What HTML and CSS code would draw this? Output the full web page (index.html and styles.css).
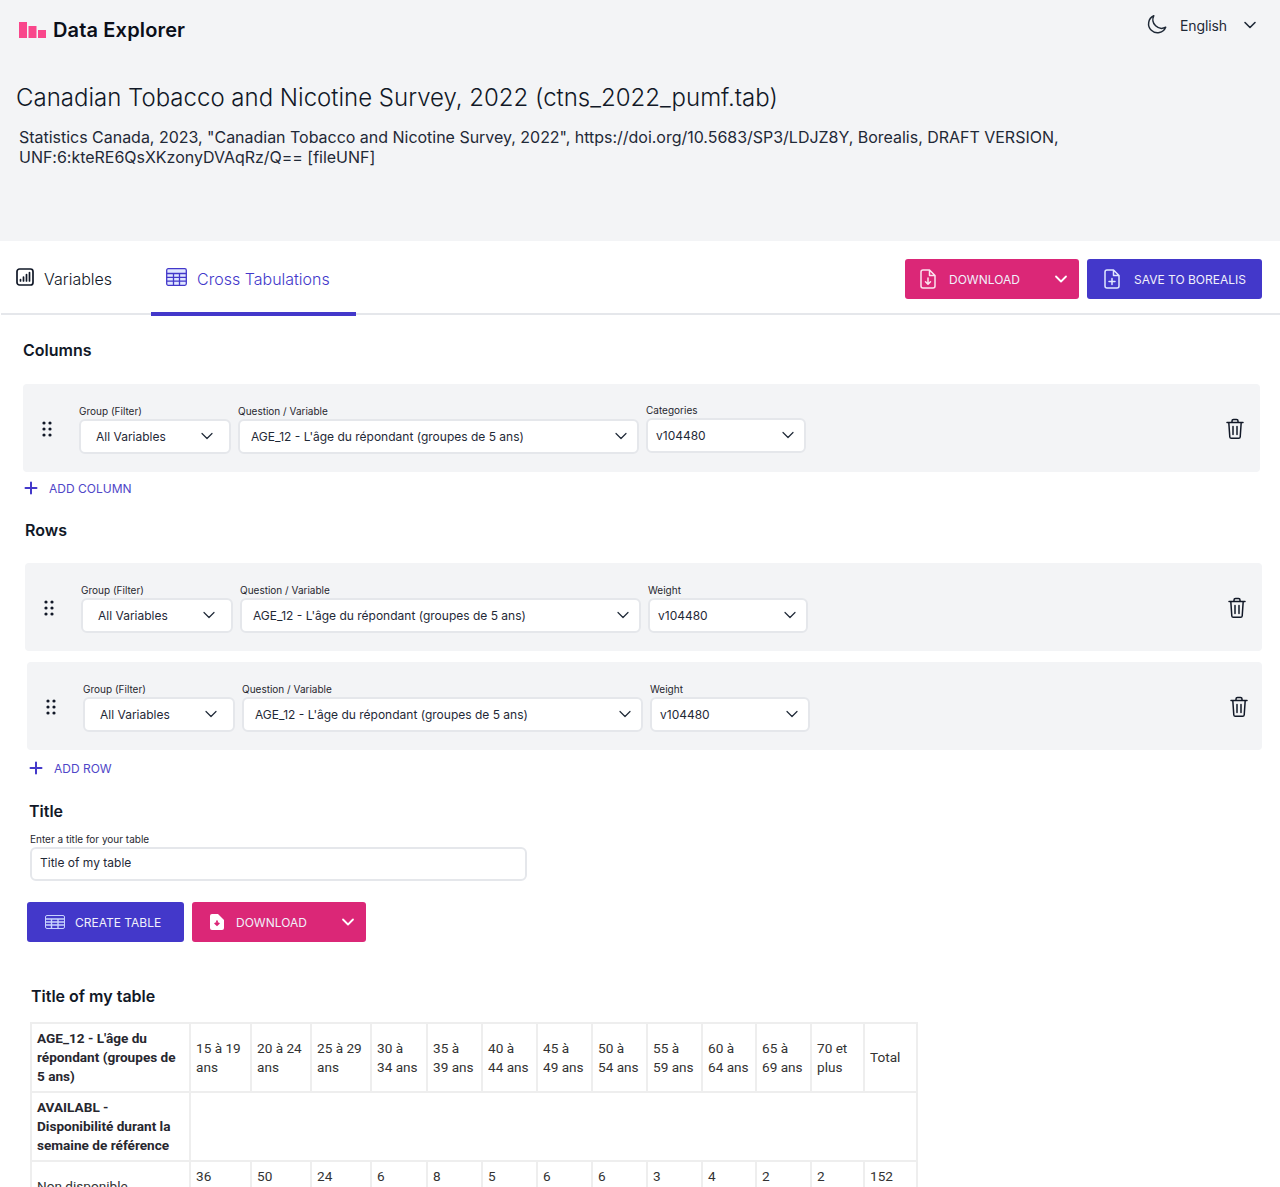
FILE: index.html
```html
<!DOCTYPE html>
<html lang="en">
<head>
    <meta charset="UTF-8">
    <meta name="viewport" content="width=device-width, initial-scale=1.0">
    <title>Data Explorer</title>
    <link rel="stylesheet" href="styles.css">
</head>
<body>
    <header class="top">
        <div class="top-bar">
            <div class="brand">
                <svg class="logo" width="28" height="16" viewBox="0 0 28 16"><rect x="0" y="0" width="8" height="16"/><rect x="9.500" y="4" width="8" height="12"/><rect x="19" y="8" width="8" height="8"/></svg>
                <span>Data Explorer</span>
            </div>
            <div class="top-tools">
                <svg class="moon" width="22" height="22" viewBox="0 0 24 24" fill="none" stroke="#1f2937" stroke-width="1.600" stroke-linecap="round" stroke-linejoin="round"><path d="M21.500 15.500A9.500 9.500 0 0 1 8.500 3a9.700 9.700 0 1 0 13 12.500z"/></svg>
                <span class="lang">English</span>
                <svg class="chev-top" width="14" height="14" viewBox="0 0 14 14" fill="none" stroke="#1f2937" stroke-width="1.600" stroke-linecap="round" stroke-linejoin="round"><path d="M2 4.500l5 5 5-5"/></svg>
            </div>
        </div>
        <h1>Canadian Tobacco and Nicotine Survey, 2022 (ctns_2022_pumf.tab)</h1>
        <p class="citation">Statistics Canada, 2023, "Canadian Tobacco and Nicotine Survey, 2022", https://doi.org/10.5683/SP3/LDJZ8Y, Borealis, DRAFT VERSION,<br>UNF:6:kteRE6QsXKzonyDVAqRz/Q== [fileUNF]</p>
    </header>

    <nav class="tabs">
        <div class="tab">
            <svg class="tab-icon" width="18" height="18" viewBox="0 0 18 18" fill="none" stroke="#111827" stroke-width="1.700" stroke-linecap="round"><rect x="1" y="1" width="16" height="16" rx="2.500"/><path d="M4.500 13v-1.500M7.500 13V9M10.500 13V6.500M13.500 13V4.500"/></svg>
            <span>Variables</span>
        </div>
        <div class="tab tab-active">
            <svg class="tab-icon" width="21" height="18" viewBox="0 0 21 18" fill="#e0e7ff" stroke="#4338ca" stroke-width="1.300"><rect x=".7" y=".7" width="19.600" height="16.600" rx="1.500"/><path d="M.7 5.500h19.600M.7 9.300h19.600M.7 13.200h19.600M7.500 5.500v11.800M13.500 5.500v11.800" fill="none"/></svg>
            <span>Cross Tabulations</span>
        </div>
        <div class="tab-actions">
            <button class="btn btn-pink btn-download">
                <svg width="16" height="20" viewBox="0 0 16 20" fill="none" stroke="#fbe4ef" stroke-width="1.500" stroke-linecap="round" stroke-linejoin="round"><path d="M3 1h6.500L15 6.500V17a2 2 0 0 1-2 2H3a2 2 0 0 1-2-2V3a2 2 0 0 1 2-2zM9.500 1v5.500H15M8 9v6M5.500 12.800L8 15.300l2.500-2.500"/></svg>
                <span class="btn-label">Download</span>
                <svg class="btn-chev" width="14" height="14" viewBox="0 0 14 14" fill="none" stroke="#fff" stroke-width="1.800" stroke-linecap="round" stroke-linejoin="round"><path d="M2 4.500l5 5 5-5"/></svg>
            </button>
            <button class="btn btn-blue btn-save">
                <svg width="16" height="20" viewBox="0 0 16 20" fill="none" stroke="#e0e7ff" stroke-width="1.500" stroke-linecap="round" stroke-linejoin="round"><path d="M3 1h6.500L15 6.500V17a2 2 0 0 1-2 2H3a2 2 0 0 1-2-2V3a2 2 0 0 1 2-2zM9.500 1v5.500H15M8 9.500v6M5 12.500h6"/></svg>
                <span class="btn-label">Save to Borealis</span>
            </button>
        </div>
    </nav>

    <main>
        <section class="section-columns">
            <h2>Columns</h2>
            <div class="filter-row">
                <svg class="grip" width="10" height="16" viewBox="0 0 10 16" fill="#111827"><circle cx="2" cy="2" r="1.600"/><circle cx="8" cy="2" r="1.600"/><circle cx="2" cy="8" r="1.600"/><circle cx="8" cy="8" r="1.600"/><circle cx="2" cy="14" r="1.600"/><circle cx="8" cy="14" r="1.600"/></svg>
                <div class="field field-group"><label>Group (Filter)</label><div class="select"><span>All Variables</span><svg width="12" height="12" viewBox="0 0 12 12" fill="none" stroke="#1f2937" stroke-width="1.200" stroke-linecap="round" stroke-linejoin="round"><path d="M1 3.500l5 5 5-5"/></svg></div></div>
                <div class="field field-question"><label>Question / Variable</label><div class="select"><span>AGE_12 - L'âge du répondant (groupes de 5 ans)</span><svg width="12" height="12" viewBox="0 0 12 12" fill="none" stroke="#1f2937" stroke-width="1.200" stroke-linecap="round" stroke-linejoin="round"><path d="M1 3.500l5 5 5-5"/></svg></div></div>
                <div class="field field-extra raised"><label>Categories</label><div class="select"><span>v104480</span><svg width="12" height="12" viewBox="0 0 12 12" fill="none" stroke="#1f2937" stroke-width="1.200" stroke-linecap="round" stroke-linejoin="round"><path d="M1 3.500l5 5 5-5"/></svg></div></div>
                <svg class="trash" width="18" height="22" viewBox="0 0 18 22" fill="none" stroke="#111827" stroke-width="1.500" stroke-linecap="round" stroke-linejoin="round"><path d="M1 4.500h16M6 4.500V3a1.500 1.500 0 0 1 1.500-1.500h3A1.500 1.500 0 0 1 12 3v1.500M2.800 4.500l1 14.500a1.500 1.500 0 0 0 1.500 1.300h7.400a1.500 1.500 0 0 0 1.500-1.300l1-14.500M7 8.500v8M11 8.500v8"/></svg>
            </div>
            <div class="add-link">
                <svg width="14" height="14" viewBox="0 0 14 14" fill="none" stroke="#4338ca" stroke-width="2" stroke-linecap="round"><path d="M7 1.500v11M1.500 7h11"/></svg>
                <span>Add Column</span>
            </div>
        </section>

        <section class="section-rows">
            <h2>Rows</h2>
            <div class="filter-row">
                <svg class="grip" width="10" height="16" viewBox="0 0 10 16" fill="#111827"><circle cx="2" cy="2" r="1.600"/><circle cx="8" cy="2" r="1.600"/><circle cx="2" cy="8" r="1.600"/><circle cx="8" cy="8" r="1.600"/><circle cx="2" cy="14" r="1.600"/><circle cx="8" cy="14" r="1.600"/></svg>
                <div class="field field-group"><label>Group (Filter)</label><div class="select"><span>All Variables</span><svg width="12" height="12" viewBox="0 0 12 12" fill="none" stroke="#1f2937" stroke-width="1.200" stroke-linecap="round" stroke-linejoin="round"><path d="M1 3.500l5 5 5-5"/></svg></div></div>
                <div class="field field-question"><label>Question / Variable</label><div class="select"><span>AGE_12 - L'âge du répondant (groupes de 5 ans)</span><svg width="12" height="12" viewBox="0 0 12 12" fill="none" stroke="#1f2937" stroke-width="1.200" stroke-linecap="round" stroke-linejoin="round"><path d="M1 3.500l5 5 5-5"/></svg></div></div>
                <div class="field field-extra"><label>Weight</label><div class="select"><span>v104480</span><svg width="12" height="12" viewBox="0 0 12 12" fill="none" stroke="#1f2937" stroke-width="1.200" stroke-linecap="round" stroke-linejoin="round"><path d="M1 3.500l5 5 5-5"/></svg></div></div>
                <svg class="trash" width="18" height="22" viewBox="0 0 18 22" fill="none" stroke="#111827" stroke-width="1.500" stroke-linecap="round" stroke-linejoin="round"><path d="M1 4.500h16M6 4.500V3a1.500 1.500 0 0 1 1.500-1.500h3A1.500 1.500 0 0 1 12 3v1.500M2.800 4.500l1 14.500a1.500 1.500 0 0 0 1.500 1.300h7.400a1.500 1.500 0 0 0 1.500-1.300l1-14.500M7 8.500v8M11 8.500v8"/></svg>
            </div>
            <div class="filter-row filter-row-second">
                <svg class="grip" width="10" height="16" viewBox="0 0 10 16" fill="#111827"><circle cx="2" cy="2" r="1.600"/><circle cx="8" cy="2" r="1.600"/><circle cx="2" cy="8" r="1.600"/><circle cx="8" cy="8" r="1.600"/><circle cx="2" cy="14" r="1.600"/><circle cx="8" cy="14" r="1.600"/></svg>
                <div class="field field-group"><label>Group (Filter)</label><div class="select"><span>All Variables</span><svg width="12" height="12" viewBox="0 0 12 12" fill="none" stroke="#1f2937" stroke-width="1.200" stroke-linecap="round" stroke-linejoin="round"><path d="M1 3.500l5 5 5-5"/></svg></div></div>
                <div class="field field-question"><label>Question / Variable</label><div class="select"><span>AGE_12 - L'âge du répondant (groupes de 5 ans)</span><svg width="12" height="12" viewBox="0 0 12 12" fill="none" stroke="#1f2937" stroke-width="1.200" stroke-linecap="round" stroke-linejoin="round"><path d="M1 3.500l5 5 5-5"/></svg></div></div>
                <div class="field field-extra"><label>Weight</label><div class="select"><span>v104480</span><svg width="12" height="12" viewBox="0 0 12 12" fill="none" stroke="#1f2937" stroke-width="1.200" stroke-linecap="round" stroke-linejoin="round"><path d="M1 3.500l5 5 5-5"/></svg></div></div>
                <svg class="trash" width="18" height="22" viewBox="0 0 18 22" fill="none" stroke="#111827" stroke-width="1.500" stroke-linecap="round" stroke-linejoin="round"><path d="M1 4.500h16M6 4.500V3a1.500 1.500 0 0 1 1.500-1.500h3A1.500 1.500 0 0 1 12 3v1.500M2.800 4.500l1 14.500a1.500 1.500 0 0 0 1.500 1.300h7.400a1.500 1.500 0 0 0 1.500-1.300l1-14.500M7 8.500v8M11 8.500v8"/></svg>
            </div>
            <div class="add-link add-row">
                <svg width="14" height="14" viewBox="0 0 14 14" fill="none" stroke="#4338ca" stroke-width="2" stroke-linecap="round"><path d="M7 1.500v11M1.500 7h11"/></svg>
                <span>Add Row</span>
            </div>
        </section>

        <section class="section-title">
            <h2>Title</h2>
            <label class="title-label">Enter a title for your table</label>
            <div class="title-input">Title of my table</div>
            <div class="title-actions">
                <button class="btn btn-blue btn-create">
                    <svg width="20" height="14" viewBox="0 0 20 14" fill="#e0e7ff" stroke="#c7d2fe" stroke-width="1"><rect x=".5" y=".5" width="19" height="13" rx="1.500" fill="none"/><path d="M.5 4h19M.5 7h19M.5 10h19M6.500 4v9.500M13 4v9.500" fill="none" stroke-width="1.400"/></svg>
                    <span class="btn-label">Create Table</span>
                </button>
                <button class="btn btn-pink btn-download-solid">
                    <svg width="14" height="16" viewBox="0 0 14 16"><path d="M2 0h6l6 6v8a2 2 0 0 1-2 2H2a2 2 0 0 1-2-2V2a2 2 0 0 1 2-2z" fill="#fff"/><path d="M7 6.500v4M4.700 8.800L7 11l2.300-2.200" fill="none" stroke="#db2777" stroke-width="1.800"/></svg>
                    <span class="btn-label">Download</span>
                    <svg class="btn-chev" width="14" height="14" viewBox="0 0 14 14" fill="none" stroke="#fff" stroke-width="1.800" stroke-linecap="round" stroke-linejoin="round"><path d="M2 4.500l5 5 5-5"/></svg>
                </button>
            </div>
        </section>

        <section class="section-table">
            <h2>Title of my table</h2>
            <table class="results">
                <tr class="row-head">
                    <th>AGE_12 - L'âge du répondant (groupes de 5 ans)</th>
                    <td>15 à 19 ans</td><td>20 à 24 ans</td><td>25 à 29 ans</td><td>30 à 34 ans</td><td>35 à 39 ans</td><td>40 à 44 ans</td><td>45 à 49 ans</td><td>50 à 54 ans</td><td>55 à 59 ans</td><td>60 à 64 ans</td><td>65 à 69 ans</td><td>70 et plus</td><td>Total</td>
                </tr>
                <tr class="row-var">
                    <th>AVAILABL - Disponibilité durant la semaine de référence</th>
                    <td colspan="13"></td>
                </tr>
                <tr>
                    <td>Non disponible</td>
                    <td>36<br>0.92%</td><td>50<br>1.28%</td><td>24<br>0.61%</td><td>6<br>0.15%</td><td>8<br>0.2%</td><td>5<br>0.13%</td><td>6<br>0.15%</td><td>6<br>0.15%</td><td>3<br>0.08%</td><td>4<br>0.1%</td><td>2<br>0.05%</td><td>2<br>0.05%</td><td>152<br>3.89%</td>
                </tr>
            </table>
        </section>
    </main>
</body>
</html>
```

FILE: styles.css
```css
html, body {
    margin: 0;
    padding: 0;
    height: 1187px;
    overflow: hidden;
}

body {
    font-family: Inter, "Liberation Sans", sans-serif;
    background-color: #fff;
    color: #111827;
}

/* Header */
.top {
    height: 241px;
    background-color: #f3f4f6;
    box-sizing: border-box;
    padding-top: 14px;
}

.top-bar {
    display: flex;
    justify-content: space-between;
    height: 32px;
    padding: 0 23px 0 19px;
}

.brand {
    display: flex;
    align-items: center;
    gap: 6px;
    font-size: 20px;
    font-weight: 600;
    letter-spacing: 0.15px;
    color: #0b0f19;
}

.logo {
    fill: #f9468b;
}

.top-tools {
    display: flex;
    align-items: center;
    height: 24px;
    margin-top: -1px;
}

.moon {
    margin-top: -2px;
}

.lang {
    margin-left: 12px;
    font-size: 14px;
    letter-spacing: -0.1px;
    color: #1f2937;
}

.chev-top {
    margin-left: 16px;
}

h1 {
    margin: 36px 0 0 16px;
    font-size: 24px;
    font-weight: 300;
    line-height: 32px;
    color: #111827;
}

.citation {
    margin: 13px 0 0 19px;
    font-size: 16px;
    line-height: 20px;
    letter-spacing: -0.02px;
    color: #1f2937;
}

/* Tabs */
.tabs {
    display: flex;
    align-items: flex-start;
    height: 74px;
    box-sizing: border-box;
    margin-left: 1px;
    border-bottom: 2px solid #e5e7eb;
}

.tab {
    display: flex;
    align-items: center;
    gap: 10px;
    height: 75px;
    box-sizing: border-box;
    padding: 1px 15px 0;
    font-size: 16px;
    font-weight: 300;
    color: #111827;
}

.tab-icon {
    margin-top: -4px;
}

.tab-active {
    width: 205px;
    margin-left: 24px;
    border-bottom: 4px solid #4338ca;
    padding-top: 5px;
    color: #4338ca;
}

.tab-actions {
    display: flex;
    gap: 8px;
    margin: 18px 18px 0 auto;
}

.btn {
    display: flex;
    align-items: center;
    height: 40px;
    box-sizing: border-box;
    border: none;
    border-radius: 3px;
    padding: 0;
    font-family: inherit;
    font-size: 12px;
    color: #f1f0fb;
    text-transform: uppercase;
}

.btn-pink {
    background-color: #db2777;
}

.btn-blue {
    background-color: #4338ca;
}

.btn-download {
    width: 174px;
    padding-left: 15px;
}

.btn-download .btn-label {
    margin-left: 13px;
}

.btn-chev {
    margin-left: auto;
    margin-right: 11px;
}

.btn-save {
    width: 175px;
    padding-left: 17px;
}

.btn-save .btn-label {
    margin-left: 14px;
}

h2 {
    margin: 0;
    font-size: 16px;
    font-weight: 600;
    line-height: 20px;
    color: #111827;
}

/* Filter rows */
.section-columns {
    margin: 25px 20px 0 23px;
}

.filter-row {
    display: flex;
    align-items: flex-start;
    height: 88px;
    box-sizing: border-box;
    margin-top: 24px;
    border-radius: 4px;
    background-color: #f3f4f6;
    padding: 20px 16px 0 19px;
}

.grip {
    flex: none;
    margin-top: 17px;
}

.field {
    display: flex;
    flex-direction: column;
    margin-right: 7px;
}

.field label {
    height: 15px;
    font-size: 10px;
    line-height: 14px;
    color: #27272f;
}

.raised {
    margin-top: -1px;
}

.field-group {
    width: 152px;
    margin-left: 27px;
}

.field-question {
    width: 401px;
}

.field-extra {
    width: 160px;
}

.select {
    display: flex;
    align-items: center;
    justify-content: space-between;
    height: 35px;
    box-sizing: border-box;
    border: 2px solid #e5e7eb;
    border-radius: 6px;
    background-color: #fff;
    padding: 0 10px 1px 11px;
    font-size: 12px;
    color: #1f2937;
}

.field-group .select {
    padding: 0 16px 1px 15px;
}

.field-extra .select {
    padding-left: 8px;
}

.trash {
    flex: none;
    margin: 14px 0 0 auto;
}

.filter-row-second .trash {
    margin-right: -2px;
}

.add-link {
    display: flex;
    align-items: center;
    gap: 11px;
    height: 16px;
    margin: 8px 0 0 1px;
    font-size: 12px;
    color: #4f46c8;
    text-transform: uppercase;
}

.section-rows {
    margin: 24px 18px 0 25px;
}

.section-rows .filter-row {
    margin-top: 23px;
}

.section-rows .filter-row-second {
    margin: 11px 0 0 2px;
}

.add-row {
    margin: 10px 0 0 4px;
}

/* Title */
.section-title {
    margin: 25px 0 0 29px;
}

.title-label {
    display: block;
    margin: 11px 0 0 1px;
    font-size: 10px;
    line-height: 14px;
    color: #27272f;
}

.title-input {
    width: 497px;
    height: 34px;
    box-sizing: border-box;
    margin: 1px 0 0 1px;
    border: 2px solid #e5e7eb;
    border-radius: 6px;
    padding-left: 8px;
    font-size: 12px;
    line-height: 28px;
    color: #1f2937;
}

.title-actions {
    display: flex;
    gap: 8px;
    margin: 21px 0 0 -2px;
}

.btn-create {
    width: 157px;
    padding-left: 18px;
}

.btn-create .btn-label {
    margin-left: 10px;
}

.btn-download-solid {
    width: 174px;
    padding-left: 18px;
}

.btn-download-solid .btn-label {
    margin-left: 12px;
}

/* Results table */
.section-table {
    margin: 44px 0 0 31px;
}

.results {
    width: 886px;
    margin: 16px 0 0 -1px;
    table-layout: fixed;
    border-collapse: collapse;
    font-family: Roboto, "Liberation Sans", sans-serif;
    font-size: 13.600px;
    line-height: 19px;
    color: #333;
}

.results th,
.results td {
    box-sizing: border-box;
    border: 2px solid #eeeeee;
    padding: 5px;
    text-align: left;
    vertical-align: middle;
}

.results th {
    font-weight: 700;
    color: #27272f;
}

.row-head th { width: 159px; }
.row-head td:nth-child(2) { width: 61px; }
.row-head td:nth-child(3),
.row-head td:nth-child(4) { width: 60px; }
.row-head td:nth-child(5) { width: 56px; }
.row-head td:nth-child(n+6) { width: 55px; }
.row-head td:nth-child(11) { width: 54px; }
.row-head td:nth-child(13),
.row-head td:nth-child(14) { width: 53px; }
```
